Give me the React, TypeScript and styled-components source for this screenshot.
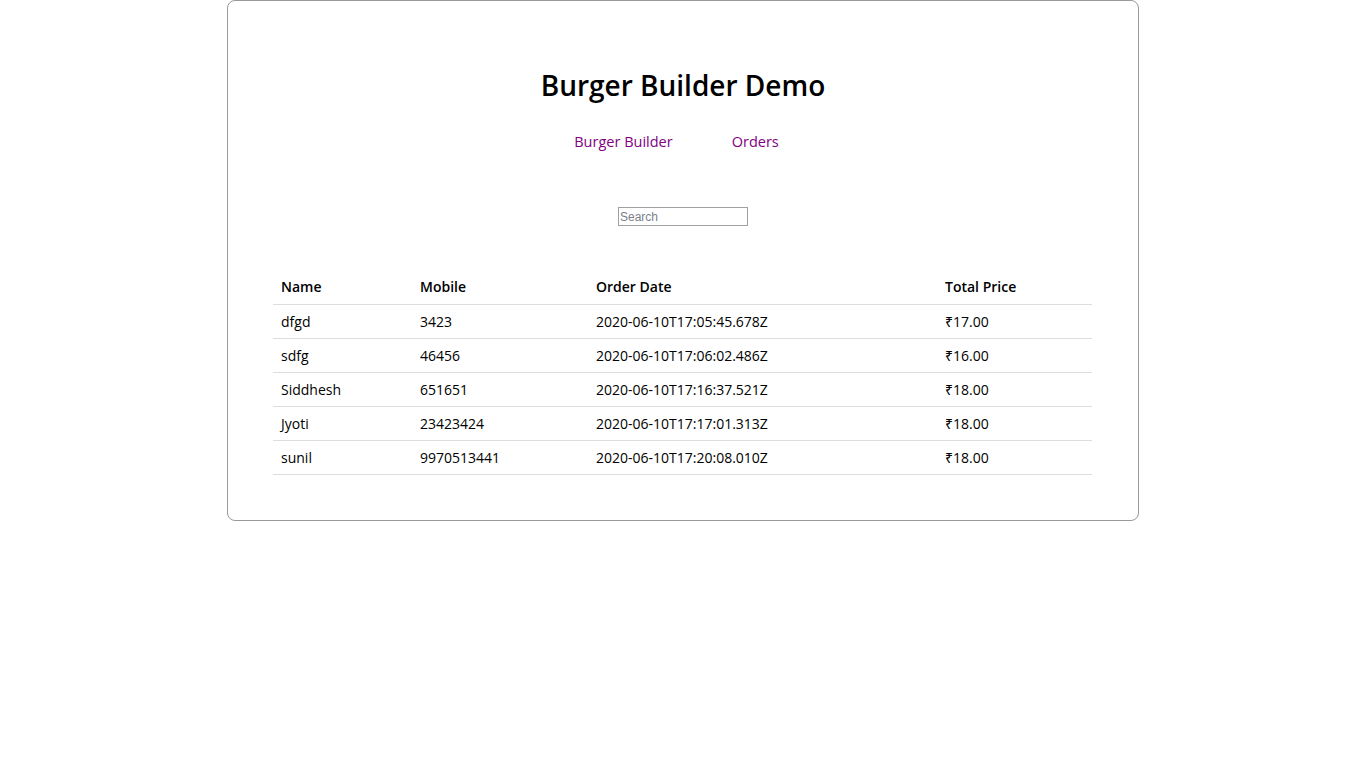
import React, { useState } from "react";
import styled, { createGlobalStyle } from "styled-components";

const Global = createGlobalStyle`
  body {
    margin: 0;
    background: #fff;
    font-family: "Open Sans", "Noto Sans", sans-serif;
    color: #000;
  }
`;

const Card = styled.div`
  box-sizing: border-box;
  width: 912px;
  margin: 0 auto;
  padding: 46px 45px 45px;
  border: 1px solid #999;
  border-radius: 8px;
`;

const Title = styled.h1`
  margin: 19px 0 0;
  text-align: center;
  font-size: 28px;
  font-weight: 600;
  line-height: 38px;
`;

const Nav = styled.nav`
  display: flex;
  justify-content: center;
  gap: 59px;
  margin-top: 28px;
  padding-right: 13px;
`;

const NavLink = styled.a`
  font-size: 14.5px;
  line-height: 20px;
  color: #800080;
  text-decoration: none;
`;

const SearchRow = styled.div`
  display: flex;
  justify-content: center;
  margin-top: 55px;
`;

const Search = styled.input`
  box-sizing: border-box;
  width: 130px;
  height: 19px;
  padding: 0 1px;
  border: 1px solid #a0a0a0;
  font-family: "Liberation Sans", Arial, sans-serif;
  font-size: 12px;
  outline: none;
  &::placeholder {
    color: #7a7f8a;
  }
`;

const Table = styled.table`
  width: 819px;
  margin-top: 45px;
  border-collapse: collapse;
  font-size: 14px;
`;

const Th = styled.th<{ $w: number }>`
  width: ${({ $w }) => $w}px;
  text-align: left;
  font-weight: 600;
  padding: 6px 8px 7px;
  line-height: 20px;
  border-bottom: 1px solid #ddd;
`;

const Td = styled.td`
  padding: 7px 8px 6px;
  line-height: 20px;
  border-bottom: 1px solid #ddd;
`;

const orders = [
  { name: "dfgd", mobile: "3423", date: "2020-06-10T17:05:45.678Z", price: 17 },
  { name: "sdfg", mobile: "46456", date: "2020-06-10T17:06:02.486Z", price: 16 },
  { name: "Siddhesh", mobile: "651651", date: "2020-06-10T17:16:37.521Z", price: 18 },
  { name: "Jyoti", mobile: "23423424", date: "2020-06-10T17:17:01.313Z", price: 18 },
  { name: "sunil", mobile: "9970513441", date: "2020-06-10T17:20:08.010Z", price: 18 },
];

const App = () => {
  const [query, setQuery] = useState("");
  const shown = orders.filter((o) =>
    o.name.toLowerCase().includes(query.toLowerCase())
  );
  return (
    <>
      <Global />
      <Card>
        <Title>Burger Builder Demo</Title>
        <Nav>
          <NavLink href="#">Burger Builder</NavLink>
          <NavLink href="#">Orders</NavLink>
        </Nav>
        <SearchRow>
          <Search
            type="text"
            placeholder="Search"
            onChange={(e: any) => setQuery(e.target.value)}
          />
        </SearchRow>
        <Table>
          <thead>
            <tr>
              <Th $w={123}>Name</Th>
              <Th $w={160}>Mobile</Th>
              <Th $w={333}>Order Date</Th>
              <Th $w={139}>Total Price</Th>
            </tr>
          </thead>
          <tbody>
            {shown.map((o) => (
              <tr key={o.date}>
                <Td>{o.name}</Td>
                <Td>{o.mobile}</Td>
                <Td>{o.date}</Td>
                <Td>₹{o.price.toFixed(2)}</Td>
              </tr>
            ))}
          </tbody>
        </Table>
      </Card>
    </>
  );
};

export default App;
